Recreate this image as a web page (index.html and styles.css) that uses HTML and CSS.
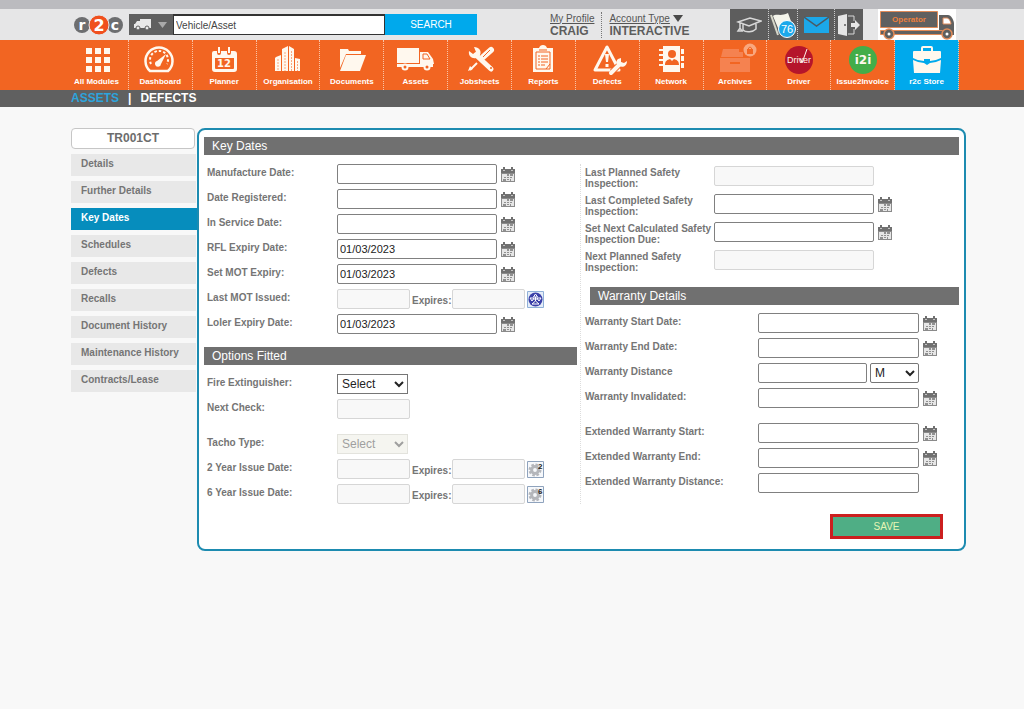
FILE: index.html
```html
<!DOCTYPE html>
<html lang="en">
  <head>
    <meta charset="utf-8">
    <meta name="viewport" content="width=device-width, initial-scale=1">
    <title>r2c - Key Dates</title>
    <link rel="stylesheet" href="styles.css">
  </head>

  <body>
    <svg class="sprite" aria-hidden="true">
      <symbol id="calendar" viewBox="0 0 14 16">
        <path fill="#707070" d="M0 3h14v4H0zM2 1h2v3H2zM10 1h2v3h-2z"/>
        <path fill="#8a8a8a" d="M0 7h14v9H0z"/>
        <path fill="#e6e6e6" d="M1 8h12v7H1z"/>
        <path fill="#909090" d="M6 8h2v2H6zM9 8h3v2H9zM3 11h2v1H3zM6 11h2v1H6zM9 11h2v1H9zM2 13h3v2H2zM6 13h2v1H6zM9 13h1v2H9z"/>
        <path fill="#c4c4c4" d="M2 4h2v1H2zM10 4h2v1h-2z"/>
      </symbol>
      <symbol id="gear" viewBox="0 0 17 17">
        <path fill="#f6f8fb" stroke="#8fa3bd" d="M.5.5h16v16H.5z"/>
        <circle cx="8" cy="9" r="5" fill="none" stroke="#b4b6bb" stroke-width="3" stroke-dasharray="2.4 1.5"/>
        <circle cx="8" cy="9" r="3.4" fill="none" stroke="#b4b6bb" stroke-width="3"/>
      </symbol>
    </svg>

    <header class="header">
      <div class="header__inner">
        <svg class="logo" viewBox="0 0 50 20" role="img" aria-label="r2c">
          <circle cx="8" cy="10" r="8" fill="#6d6e70"/>
          <circle cx="41" cy="10" r="8" fill="#6d6e70"/>
          <circle cx="25" cy="10" r="10" fill="#f0501e" stroke="#e6e6e7"/>
          <g class="logo__text">
            <text x="8" y="15">r</text>
            <text x="25" y="16" class="logo__big">2</text>
            <text x="41" y="15">c</text>
          </g>
        </svg>

        <form class="search">
          <button type="button" class="search__type" aria-label="Search type">
            <svg width="34" height="12" viewBox="0 0 34 12">
              <path fill="#e8e8e8" d="M6 0h11v9H6zM1 5l2-3h3v7H0V5z"/>
              <circle cx="4" cy="9" r="2" fill="#e8e8e8" stroke="#606060"/>
              <circle cx="13" cy="9" r="2" fill="#e8e8e8" stroke="#606060"/>
              <path fill="#a9a9a9" d="M24 3h9l-4.500 6z"/>
            </svg>
          </button>
          <input type="text" class="search__field" aria-label="Vehicle/Asset" value="Vehicle/Asset">
          <button type="submit" class="search__button">SEARCH</button>
        </form>

        <div class="profile">
          <div class="profile__item">
            <a href="#">My Profile</a>
            <b>CRAIG</b>
          </div>
          <div class="profile__item">
            <span><a href="#">Account Type</a> <svg width="10" height="7" viewBox="0 0 10 7"><path fill="#4a4a4a" d="M0 0h10L5 7z"/></svg></span>
            <b>INTERACTIVE</b>
          </div>
        </div>

        <div class="tools">
          <a href="#" class="tools__item tools__item--cap" aria-label="Training">
            <svg width="26" height="18" viewBox="0 0 26 18" fill="none" stroke="#d8d8d8" stroke-width="1.500">
              <path d="M2 6l12-4 11 3-12 5zM7 8v6c3 3 10 2 13-1V8M4 7v6M2 15l2-3 2 3z"/>
            </svg>
          </a>
          <a href="#" class="tools__item" aria-label="76 alerts">
            <svg width="28" height="28" viewBox="0 0 28 28">
              <path d="M2 4l7 20" stroke="#d6d6c8" stroke-width="2"/>
              <path fill="#f4f4ea" d="M4 5c4-3 7 1 15-3l4 11c-6 3-10 0-14 4z"/>
            </svg>
            <span class="tools__badge">76</span>
          </a>
          <a href="#" class="tools__item tools__item--wide" aria-label="Messages">
            <svg width="25" height="18" viewBox="0 0 25 18">
              <path fill="#1ba8ea" d="M0 1h25v16H0z"/>
              <path d="M0 1l12.500 9L25 1" fill="none" stroke="#4a5a64" stroke-width="1.500"/>
            </svg>
          </a>
          <a href="#" class="tools__item" aria-label="Log out">
            <svg width="24" height="24" viewBox="0 0 24 24">
              <path d="M11 3h6v5M17 16v5h-6" fill="none" stroke="#d8d8d8"/>
              <path fill="#e6e6e6" d="M1 3l9-2v22l-9-2zM14 10h4V7l5 5-5 5v-3h-4z"/>
              <circle cx="8" cy="12" r="1" fill="#5d5d5d"/>
            </svg>
          </a>
        </div>

        <svg class="operator" viewBox="0 0 78 31" role="img" aria-label="Operator">
          <path fill="#fff" d="M0 0h78v31H0z"/>
          <path fill="#606060" stroke="#e08a58" d="M2.500 2.500h57v16h-57z"/>
          <path fill="#606060" d="M61 6h9c3 0 6 5 6 9v11H61z"/>
          <path fill="#fff" stroke="#e08a58" d="M65 9h4c2 0 4 4 4 6h-8z"/>
          <path fill="#606060" stroke="#e08a58" d="M2.500 21.500h62v4h-62z"/>
          <g fill="#606060" stroke="#e08a58" stroke-width="1.500">
            <circle cx="11" cy="25" r="5"/>
            <circle cx="69" cy="25" r="5"/>
          </g>
          <circle cx="11" cy="25" r="1.500" fill="#fff"/>
          <circle cx="69" cy="25" r="1.500" fill="#fff"/>
          <text x="31" y="13" class="operator__text">Operator</text>
        </svg>
      </div>
    </header>

    <nav class="nav">
      <div class="nav__inner">
        <a href="#" class="nav__item">
          <svg class="nav__icon" viewBox="0 0 40 28"><path d="M10 2h6v6h-6zM19 2h6v6h-6zM28 2h6v6h-6zM10 11h6v6h-6zM19 11h6v6h-6zM28 11h6v6h-6zM10 20h6v6h-6zM19 20h6v6h-6zM28 20h6v6h-6z"/></svg>
          All Modules
        </a>
        <a href="#" class="nav__item">
          <svg class="nav__icon" viewBox="0 0 40 28">
            <path class="line" d="M10 25a13.500 13.500 0 1 1 18 0z" stroke-width="2.500"/>
            <path class="line" d="M11 18a9 9 0 1 1 16 0" stroke-width="2" stroke-dasharray="2.500 2"/>
            <path d="M17 15l9-7-5 10a3 3 0 1 1-4-3z"/>
          </svg>
          Dashboard
        </a>
        <a href="#" class="nav__item">
          <svg class="nav__icon" viewBox="0 0 40 28">
            <path fill-rule="evenodd" d="M10 5h3v2a2 2 0 0 0 4 0V5h6v2a2 2 0 0 0 4 0V5h3q3 0 3 3v15q0 3-3 3H11q-3 0-3-3V7q0-2 2-2zM11 12v10q0 1 1 1h17q1 0 1-1V12z"/>
            <path d="M14 1h2v6h-2zM24 1h2v6h-2z"/>
            <text x="20" y="21" class="nav__glyph">12</text>
          </svg>
          Planner
        </a>
        <a href="#" class="nav__item">
          <svg class="nav__icon" viewBox="0 0 40 28">
            <path d="M8 11l5-2v16H7V12zM14 3l6-3v25h-6zM21 0l5 3v22h-5zM27 12l5 1v12h-5z"/>
            <path class="cut cut--thin" d="M10 13v12M17 6v19M23.500 5v20M29.500 15v10" stroke-dasharray="2 1"/>
          </svg>
          Organisation
        </a>
        <a href="#" class="nav__item">
          <svg class="nav__icon" viewBox="0 0 40 28"><path d="M8 3h8l1 2h12v3H14l-6 14zM14 9h20l-6 16H8z"/></svg>
          Documents
        </a>
        <a href="#" class="nav__item">
          <svg class="nav__icon" viewBox="0 0 40 28">
            <path d="M1 2h22v15H1zM1 18h36v3H1zM24 6h8l5 7 1 5H24z"/>
            <path class="cut" d="M27 8h4l3 5h-7z"/>
            <circle cx="9" cy="21" r="3.500"/><circle cx="31" cy="21" r="3.500"/>
            <circle class="cut-fill" cx="9" cy="21" r="1.500"/><circle class="cut-fill" cx="31" cy="21" r="1.500"/>
          </svg>
          Assets
        </a>
        <a href="#" class="nav__item">
          <svg class="nav__icon" viewBox="0 0 40 28">
            <path class="line" d="M10 24l7-7" stroke-width="2"/>
            <path d="M8 25l2-5 3 3z"/>
            <path class="line" d="M23 11l8-7" stroke-width="6" stroke-linecap="round"/>
            <path class="cut" d="M23 11l7-7"/>
            <path class="line" d="M16 9l15 14" stroke-width="5" stroke-linecap="round"/>
            <path d="M9 5l4 3 3-2-2-5c5 0 8 4 6 8l-4 3c-4 1-8-2-7-7z"/>
            <circle class="cut-fill" cx="31" cy="22" r="1"/>
          </svg>
          Jobsheets
        </a>
        <a href="#" class="nav__item">
          <svg class="nav__icon" viewBox="0 0 40 28">
            <path d="M10 2h6q1-3 4-3t4 3h6v24H10z"/>
            <path class="cut" d="M13 6h14v17H13zM16 4h8"/>
            <path d="M14 7h12v15H14z"/>
            <path class="cut" d="M15 10h2M18 10h7M15 13h2M18 13h7M15 16h2M18 16h7M15 19h2M18 19h4M27 18l-4 5"/>
          </svg>
          Reports
        </a>
        <a href="#" class="nav__item">
          <svg class="nav__icon" viewBox="0 0 40 28">
            <path class="line" d="M20 1L8 24h24z" stroke-width="3" stroke-linejoin="round"/>
            <path d="M18 8h4l-1 8h-2zM18.500 18h3v3h-3z"/>
            <path class="cut" d="M25 26l9-9" stroke-width="6"/>
            <path class="line" d="M24 27l9-9" stroke-width="4" stroke-linecap="round"/>
            <path d="M31 13l3-1v4l3 1 3-2c0 5-4 7-8 5s-3-5-1-7z"/>
          </svg>
          Defects
        </a>
        <a href="#" class="nav__item">
          <svg class="nav__icon" viewBox="0 0 40 28">
            <path d="M12 0h17v26H12zM30 3h3v5h-3zM30 10h3v5h-3zM30 17h3v5h-3z"/>
            <path class="line" d="M8 4h5M8 9h5M8 14h5M8 19h5" stroke-width="2"/>
            <circle class="cut-fill" cx="21" cy="8" r="4"/>
            <path class="cut-fill" d="M14 19c0-4 2-5 5-6l2 2 2-2c3 1 5 2 5 6z"/>
          </svg>
          Network
        </a>
        <a href="#" class="nav__item">
          <svg class="nav__icon" viewBox="0 0 40 28">
            <path class="faded" d="M8 3h16v3h4v5H6zM5 12h30v14H5z"/>
            <path class="cut" d="M15 17h10" stroke-width="2"/>
            <circle class="badge" cx="35" cy="4" r="6.500"/>
            <path class="cut-fill" d="M32 3h6v5h-6z"/>
            <path class="cut" d="M33.500 4V2q1.500-2 3 0v2"/>
          </svg>
          Archives
        </a>
        <a href="#" class="nav__item">
          <svg class="nav__icon" viewBox="0 0 40 28">
            <circle cx="20" cy="14" r="14" fill="#b5152b"/>
            <text x="20" y="17" class="nav__driver">Driver</text>
            <path class="line" d="M21 12l2 5 5-14"/>
          </svg>
          Driver
        </a>
        <a href="#" class="nav__item">
          <svg class="nav__icon" viewBox="0 0 40 28">
            <circle cx="20" cy="14" r="14" fill="#43ad49"/>
            <text x="20" y="18" class="nav__glyph nav__glyph--big">i2i</text>
          </svg>
          Issue2Invoice
        </a>
        <a href="#" class="nav__item nav__item--store">
          <svg class="nav__icon" viewBox="0 0 40 28">
            <path class="line" d="M15 6V2q0-1 1-1h8q1 0 1 1v4" stroke-width="2"/>
            <path d="M7 5h26q1 0 1 1v6q-6 3-11 3v-2h-6v2q-6 0-11-3V6q0-1 1-1zM6 14q6 3 11 3l3 2 3-2q5 0 11-3l-1 13H7z"/>
          </svg>
          r2c Store
        </a>
      </div>
    </nav>

    <div class="crumbs">
      <div class="crumbs__inner">
        <a href="#" class="crumbs__link">ASSETS</a>
        <span>|</span>
        <b>DEFECTS</b>
      </div>
    </div>

    <main class="content">
      <aside class="side">
        <div class="side__title">TR001CT</div>
        <a href="#" class="side__link">Details</a>
        <a href="#" class="side__link">Further Details</a>
        <a href="#" class="side__link side__link--active">Key Dates</a>
        <a href="#" class="side__link">Schedules</a>
        <a href="#" class="side__link">Defects</a>
        <a href="#" class="side__link">Recalls</a>
        <a href="#" class="side__link">Document History</a>
        <a href="#" class="side__link">Maintenance History</a>
        <a href="#" class="side__link">Contracts/Lease</a>
      </aside>

      <form class="panel">
        <h2 class="bar">Key Dates</h2>
        <div class="columns">
          <div class="column column--left">
            <div class="rows">
              <div class="row">
                <label for="manufacture">Manufacture Date:</label>
                <input type="text" id="manufacture">
                <button type="button" class="icon-button" aria-label="Pick date"><svg><use href="#calendar"/></svg></button>
              </div>
              <div class="row">
                <label for="registered">Date Registered:</label>
                <input type="text" id="registered">
                <button type="button" class="icon-button" aria-label="Pick date"><svg><use href="#calendar"/></svg></button>
              </div>
              <div class="row">
                <label for="service">In Service Date:</label>
                <input type="text" id="service">
                <button type="button" class="icon-button" aria-label="Pick date"><svg><use href="#calendar"/></svg></button>
              </div>
              <div class="row">
                <label for="rfl">RFL Expiry Date:</label>
                <input type="text" id="rfl" value="01/03/2023">
                <button type="button" class="icon-button" aria-label="Pick date"><svg><use href="#calendar"/></svg></button>
              </div>
              <div class="row">
                <label for="mot">Set MOT Expiry:</label>
                <input type="text" id="mot" value="01/03/2023">
                <button type="button" class="icon-button" aria-label="Pick date"><svg><use href="#calendar"/></svg></button>
              </div>
              <div class="row row--pair">
                <label for="mot-issued">Last MOT Issued:</label>
                <input type="text" id="mot-issued" disabled>
                <label for="mot-expires" class="expires">Expires:</label>
                <input type="text" id="mot-expires" disabled>
                <button type="button" class="icon-button icon-button--big" aria-label="MOT history">
                  <svg viewBox="0 0 17 17">
                    <path fill="#e4ecf8" stroke="#8fb0d8" d="M.5.5h16v16H.5z"/>
                    <circle cx="8.500" cy="8.500" r="7" fill="#3a3fa8"/>
                    <path fill="none" stroke="#fff" d="M8.500 3l2 3h-4zM3 7h4l-2 3zM10 7h4l-2 3zM8.500 6v4M6 8l5 0M5 13l3.500-3 3.500 3z"/>
                  </svg>
                </button>
              </div>
              <div class="row">
                <label for="loler">Loler Expiry Date:</label>
                <input type="text" id="loler" value="01/03/2023">
                <button type="button" class="icon-button" aria-label="Pick date"><svg><use href="#calendar"/></svg></button>
              </div>
            </div>

            <h2 class="bar bar--options">Options Fitted</h2>
            <div class="rows">
              <div class="row">
                <label for="extinguisher">Fire Extinguisher:</label>
                <select id="extinguisher"><option>Select</option></select>
              </div>
              <div class="row row--short row--last">
                <label for="next-check">Next Check:</label>
                <input type="text" id="next-check" disabled>
              </div>
              <div class="row">
                <label for="tacho">Tacho Type:</label>
                <select id="tacho" disabled><option>Select</option></select>
              </div>
              <div class="row row--pair">
                <label for="issue-2">2 Year Issue Date:</label>
                <input type="text" id="issue-2" disabled>
                <label for="expires-2" class="expires">Expires:</label>
                <input type="text" id="expires-2" disabled>
                <button type="button" class="icon-button icon-button--big" aria-label="2 year check">
                  <svg><use href="#gear"/><text x="11" y="8">2</text></svg>
                </button>
              </div>
              <div class="row row--pair">
                <label for="issue-6">6 Year Issue Date:</label>
                <input type="text" id="issue-6" disabled>
                <label for="expires-6" class="expires">Expires:</label>
                <input type="text" id="expires-6" disabled>
                <button type="button" class="icon-button icon-button--big" aria-label="6 year check">
                  <svg><use href="#gear"/><text x="11" y="8">6</text></svg>
                </button>
              </div>
            </div>
          </div>

          <div class="column column--right">
            <div class="rows rows--safety">
              <div class="row">
                <label for="last-planned">Last Planned Safety Inspection:</label>
                <input type="text" id="last-planned" disabled>
              </div>
              <div class="row">
                <label for="last-completed">Last Completed Safety Inspection:</label>
                <input type="text" id="last-completed">
                <button type="button" class="icon-button" aria-label="Pick date"><svg><use href="#calendar"/></svg></button>
              </div>
              <div class="row">
                <label for="next-calculated">Set Next Calculated Safety Inspection Due:</label>
                <input type="text" id="next-calculated">
                <button type="button" class="icon-button" aria-label="Pick date"><svg><use href="#calendar"/></svg></button>
              </div>
              <div class="row">
                <label for="next-planned">Next Planned Safety Inspection:</label>
                <input type="text" id="next-planned" disabled>
              </div>
            </div>

            <h2 class="bar bar--warranty">Warranty Details</h2>
            <div class="rows rows--warranty">
              <div class="row">
                <label for="w-start">Warranty Start Date:</label>
                <input type="text" id="w-start">
                <button type="button" class="icon-button" aria-label="Pick date"><svg><use href="#calendar"/></svg></button>
              </div>
              <div class="row">
                <label for="w-end">Warranty End Date:</label>
                <input type="text" id="w-end">
                <button type="button" class="icon-button" aria-label="Pick date"><svg><use href="#calendar"/></svg></button>
              </div>
              <div class="row row--distance">
                <label for="w-distance">Warranty Distance</label>
                <input type="text" id="w-distance">
                <select aria-label="Distance unit"><option>M</option></select>
              </div>
              <div class="row row--last">
                <label for="w-invalid">Warranty Invalidated:</label>
                <input type="text" id="w-invalid">
                <button type="button" class="icon-button" aria-label="Pick date"><svg><use href="#calendar"/></svg></button>
              </div>
              <div class="row">
                <label for="ew-start">Extended Warranty Start:</label>
                <input type="text" id="ew-start">
                <button type="button" class="icon-button" aria-label="Pick date"><svg><use href="#calendar"/></svg></button>
              </div>
              <div class="row">
                <label for="ew-end">Extended Warranty End:</label>
                <input type="text" id="ew-end">
                <button type="button" class="icon-button" aria-label="Pick date"><svg><use href="#calendar"/></svg></button>
              </div>
              <div class="row">
                <label for="ew-distance">Extended Warranty Distance:</label>
                <input type="text" id="ew-distance">
              </div>
            </div>
          </div>
        </div>
        <div class="actions">
          <button type="submit" class="save">SAVE</button>
        </div>
      </form>
    </main>
  </body>
</html>
```

FILE: styles.css
```css
* {
    box-sizing: border-box;
}
body {
    margin: 0;
    font-family: "Liberation Sans", Arial, sans-serif;
    font-size: 10px;
    color: #6d6d6d;
    background: #f8f8f8;
}
button, input, select {
    font-family: inherit;
    margin: 0;
}
button {
    padding: 0;
    border: none;
    cursor: pointer;
}
svg {
    display: block;
}
.sprite {
    display: none;
}

/* header */
.header {
    border-top: 9px solid #bbbbbf;
    background: #e6e6e7;
}
.header__inner {
    display: flex;
    align-items: center;
    max-width: 894px;
    height: 31px;
    margin: 0 auto;
    padding: 0 3px 0 9px;
}
.logo {
    width: 50px;
    height: 20px;
    margin-right: 5px;
}
.logo__text {
    font: bold 14px "DejaVu Sans", sans-serif;
    fill: #fff;
    text-anchor: middle;
}
.logo__big {
    font-size: 16px;
}
.search {
    display: flex;
    height: 21px;
    margin-right: 73px;
}
.search__type {
    display: flex;
    align-items: center;
    justify-content: center;
    width: 44px;
    background: #606060;
}
.search__field {
    width: 212px;
    padding: 0 2px;
    border: 1px solid #333;
    border-top-width: 2px;
    font-size: 10px;
    color: #444;
    background: #fff;
}
.search__button {
    width: 92px;
    font-size: 10px;
    color: #fff;
    background: #00a9ec;
}
.profile {
    display: flex;
    gap: 7px;
}
.profile__item {
    line-height: 13px;
}
.profile__item + .profile__item {
    padding-left: 7px;
    border-left: 1px dotted #777;
}
.profile__item a {
    color: #555;
}
.profile__item b {
    display: block;
    font-size: 12px;
    color: #5d5d5d;
}
.profile__item svg {
    display: inline-block;
}
.tools {
    display: flex;
    height: 31px;
    margin-left: auto;
    margin-right: 15px;
    background: #5d5d5d;
}
.tools__item {
    position: relative;
    display: flex;
    align-items: center;
    justify-content: center;
    width: 29px;
}
.tools__item--cap {
    width: 38px;
}
.tools__item--wide {
    width: 37px;
}
.tools__item + .tools__item {
    border-left: 1px dotted #ccc;
}
.tools__badge {
    position: absolute;
    right: 1px;
    bottom: 2px;
    width: 18px;
    border: 1px solid #fff;
    border-radius: 50%;
    font-size: 11px;
    line-height: 16px;
    text-align: center;
    color: #fff;
    background: #1ba8ea;
}
.operator {
    width: 78px;
    height: 31px;
}
.operator__text {
    font-size: 8px;
    font-weight: bold;
    fill: #ee7f3c;
    text-anchor: middle;
}

/* main menu */
.nav {
    background: #f26522;
}
.nav__inner {
    display: grid;
    grid-template-columns: repeat(14, 1fr);
    max-width: 894px;
    margin: 0 auto;
}
.nav__item {
    display: flex;
    flex-direction: column;
    align-items: center;
    height: 50px;
    padding-top: 6px;
    border-right: 1px dotted #f9c3a6;
    font-size: 8px;
    font-weight: bold;
    line-height: 10px;
    text-decoration: none;
    color: #fff;
}
.nav__item--store {
    background: #00a9ec;
}
.nav__icon {
    width: 40px;
    height: 28px;
    margin-bottom: 3px;
    overflow: visible;
    fill: #fff8ee;
}
.nav__icon .line {
    fill: none;
    stroke: #fff8ee;
}
.nav__icon .cut {
    fill: none;
    stroke: #f26522;
}
.nav__icon .cut--thin {
    stroke: #f9a77e;
}
.nav__icon .cut-fill {
    fill: #f26522;
}
.nav__icon .faded {
    fill: #f58250;
}
.nav__icon .badge {
    fill: #f9a77e;
}
.nav__glyph {
    font: bold 10px "DejaVu Sans", sans-serif;
    text-anchor: middle;
}
.nav__glyph--big {
    font-size: 12px;
}
.nav__driver {
    font-size: 9px;
    font-weight: normal;
    text-anchor: middle;
}

.crumbs {
    background: #606060;
}
.crumbs__inner {
    display: flex;
    gap: 9px;
    max-width: 894px;
    margin: 0 auto;
    padding-left: 6px;
    font-size: 12px;
    line-height: 17px;
    font-weight: bold;
    color: #fff;
}
.crumbs__link {
    text-decoration: none;
    color: #2da4dc;
}

/* content */
.content {
    display: flex;
    align-items: flex-start;
    max-width: 908px;
    margin: 0 auto;
    padding: 21px 0 20px 13px;
}
.side {
    display: flex;
    flex-direction: column;
    flex: none;
    gap: 5px;
    width: 126px;
}
.side__title {
    height: 21px;
    margin-right: 2px;
    border: 1px solid #c6c6c6;
    border-radius: 4px;
    font-size: 12px;
    font-weight: bold;
    line-height: 18px;
    text-align: center;
    background: #fff;
}
.side__link {
    height: 22px;
    margin-right: 1px;
    padding-left: 10px;
    font-weight: bold;
    line-height: 20px;
    text-decoration: none;
    color: #757575;
    background: #e8e8e8;
}
.side__link--active {
    margin-right: 0;
    color: #fff;
    background: #068dbd;
}
.panel {
    flex: 1;
    padding: 7px 5px 10px;
    border: 2px solid #1d8bb0;
    border-radius: 8px;
    background: #fff;
}
.bar {
    height: 18px;
    margin: 0;
    padding-left: 8px;
    font-size: 12px;
    font-weight: normal;
    line-height: 18px;
    color: #fff;
    background: #707070;
}
.columns {
    display: grid;
    grid-template-columns: 376fr 379fr;
    margin-top: 9px;
}
.column--left {
    padding-right: 3px;
}
.column--right {
    padding-top: 2px;
    border-left: 1px dotted #ddd;
}
.rows {
    display: flex;
    flex-direction: column;
    gap: 5px;
    padding-left: 3px;
}
.row {
    display: grid;
    grid-template-columns: 130px 160px 14px;
    align-items: center;
}
.row label {
    padding-bottom: 4px;
    font-weight: bold;
    line-height: 11px;
    color: #757575;
}
.row .icon-button {
    margin-left: 4px;
}
.row--pair {
    grid-template-columns: 130px 73px 42px 73px 17px;
}
.row--pair .expires {
    padding: 2px 0 0 2px;
}
.row--pair .icon-button {
    margin-left: 2px;
}
.row--short {
    grid-template-columns: 130px 73px;
}
.row--last {
    margin-bottom: 10px;
}
.row input {
    width: 100%;
    height: 20px;
    padding: 0 2px;
    border: 1px solid #808080;
    border-radius: 2px;
    font-size: 11px;
    color: #222;
    background: #fff;
}
.row input:disabled {
    border-color: #d6d6d6;
    background: #f8f8f8;
}
.row select {
    width: 71px;
    height: 20px;
    padding: 0;
    border: 1px solid #767676;
    border-radius: 0;
    font-size: 12px;
    color: #222;
    background: #fff;
}
.row select:disabled {
    border-color: #d8d8d0;
    color: #777;
    background: #f2f2ea;
}
.icon-button {
    width: 14px;
    height: 16px;
    background: none;
}
.icon-button svg {
    width: 14px;
    height: 16px;
}
.icon-button--big, .icon-button--big svg {
    width: 17px;
    height: 17px;
}
.icon-button text {
    font-size: 8px;
    font-weight: bold;
    fill: #222;
}
.bar--options {
    margin: 13px 0 9px;
}
.rows--safety {
    gap: 6px;
    padding-left: 4px;
}
.rows--safety .row {
    grid-template-columns: 129px 160px 14px;
    align-items: start;
    height: 22px;
}
.rows--safety label {
    padding: 1px 0 0;
}
.rows--safety .icon-button {
    margin-top: 2px;
}
.bar--warranty {
    margin: 15px 0 8px 9px;
}
.rows--warranty {
    padding-left: 4px;
}
.rows--warranty .row {
    grid-template-columns: 173px 161px 14px;
}
.rows--warranty .row--distance {
    grid-template-columns: 173px 109px 49px;
}
.row--distance select {
    width: 49px;
    margin-left: 3px;
    border-radius: 2px;
}
.actions {
    display: flex;
    justify-content: flex-end;
    margin-top: 10px;
    padding-right: 16px;
}
.save {
    width: 113px;
    height: 25px;
    border: 3px solid #cc1f1f;
    font-size: 10px;
    color: #e6f5b5;
    background: #4fae85;
}
```
